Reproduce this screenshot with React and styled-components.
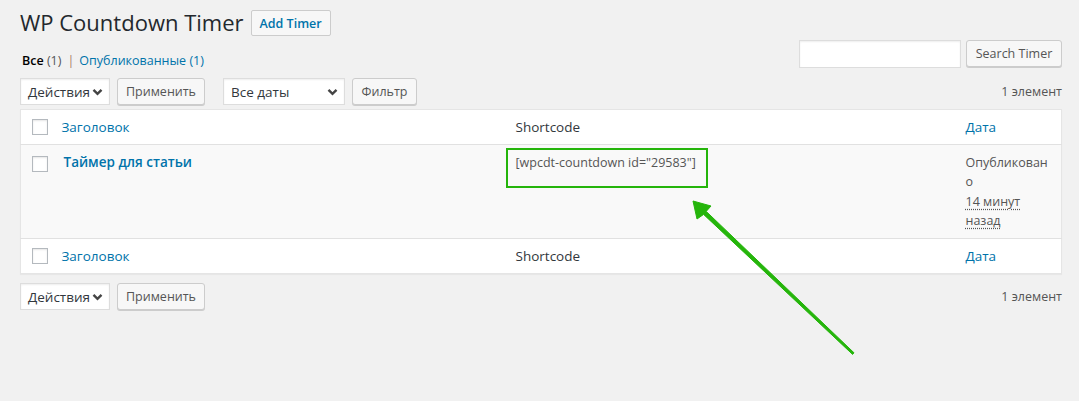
import React from "react";
import styled, { createGlobalStyle } from "styled-components";

const rows = [
    { id: 29583, title: "Таймер для статьи", status: "Опубликовано", ago: "14 минут назад" },
];

export default function App() {
    return (
        <>
            <GlobalStyle />
            <Page>
                <TitleRow>
                    <PageTitle>WP Countdown Timer</PageTitle>
                    <TitleAction>Add Timer</TitleAction>
                </TitleRow>

                <FilterRow>
                    <Views>
                        <CurrentView>Все</CurrentView> <Count>(1)</Count>
                        <Sep>|</Sep>
                        <ViewLink>Опубликованные <Count $link>(1)</Count></ViewLink>
                    </Views>
                    <SearchBox>
                        <SearchInput type="search" />
                        <Button $w={96}>Search Timer</Button>
                    </SearchBox>
                </FilterRow>

                <TableNav>
                    <Select width={90}>Действия</Select>
                    <Button $w={88}>Применить</Button>
                    <Select width={122} $spaced>Все даты</Select>
                    <Button $w={65}>Фильтр</Button>
                    <ItemCount>1 элемент</ItemCount>
                </TableNav>

                <Table>
                    <colgroup>
                        <col style={{ width: 31 }} />
                        <col style={{ width: 454 }} />
                        <col style={{ width: 450 }} />
                        <col />
                    </colgroup>
                    <thead>
                        <HeadRow>
                            <CheckCell><CheckBox /></CheckCell>
                            <HeadCell><SortLink>Заголовок</SortLink></HeadCell>
                            <HeadCell>Shortcode</HeadCell>
                            <HeadCell><SortLink>Дата</SortLink></HeadCell>
                        </HeadRow>
                    </thead>
                    <tbody>
                        {rows.map((r) => (
                            <BodyRow key={r.id}>
                                <CheckCell $body><CheckBox /></CheckCell>
                                <Cell><RowTitle>{r.title}</RowTitle></Cell>
                                <ShortcodeCell>
                                    [wpcdt-countdown id="{r.id}"]
                                    <Highlight />
                                </ShortcodeCell>
                                <Cell>
                                    {r.status}
                                    <br />
                                    <Abbr>{r.ago}</Abbr>
                                </Cell>
                            </BodyRow>
                        ))}
                    </tbody>
                    <tfoot>
                        <FootRow>
                            <CheckCell><CheckBox /></CheckCell>
                            <HeadCell><SortLink>Заголовок</SortLink></HeadCell>
                            <HeadCell>Shortcode</HeadCell>
                            <HeadCell><SortLink>Дата</SortLink></HeadCell>
                        </FootRow>
                    </tfoot>
                </Table>

                <TableNav $bottom>
                    <Select width={90}>Действия</Select>
                    <Button $w={88}>Применить</Button>
                    <ItemCount>1 элемент</ItemCount>
                </TableNav>

                <Arrow width="1079" height="401" viewBox="0 0 1079 401">
                    <polygon
                        points="693,201 711,206 706.2,211.4 854,352.8 852.6,354.4 703.6,214.4 697,219"
                        fill="#25b50b"
                        stroke="#25b50b"
                        strokeWidth="1"
                        strokeLinejoin="round"
                    />
                </Arrow>
            </Page>
        </>
    );
}

function Select({ children, width, $spaced }) {
    return (
        <SelectBox style={{ width }} $spaced={$spaced}>
            <span>{children}</span>
            <svg width="11" height="8" viewBox="0 0 11 8">
                <path d="M1.5 1.8 L5.5 5.8 L9.5 1.8" fill="none" stroke="#444" strokeWidth="2.4" />
            </svg>
        </SelectBox>
    );
}

//====================================
//        THIS COMPONENT STYLES
//====================================
const GlobalStyle = createGlobalStyle`
    html, body {
        margin: 0;
        background: #f1f1f1;
    }
    body {
        font-family: "Open Sans", "Liberation Sans", sans-serif;
        font-size: 12.5px;
        color: #444;
    }
`;
const Page = styled('div')`
    position: relative;
    width: 1079px;
    height: 401px;
    box-sizing: border-box;
    padding: 0 17px 0 20px;
    overflow: hidden;
`;
const TitleRow = styled('div')`
    display: flex;
    align-items: center;
    column-gap: 7px;
    padding-top: 9px;
    height: 27px;
`;
const PageTitle = styled('h1')`
    margin: 0;
    font-size: 22px;
    font-weight: 400;
    line-height: 27px;
    color: #23282d;
`;
const Button = styled('button')`
    box-sizing: border-box;
    width: ${(props) => (props.$w ? `${props.$w}px` : "auto")};
    font-family: inherit;
    font-size: 12.5px;
    height: 27px;
    padding: 0 8px;
    border: 1px solid #ccc;
    border-radius: 3px;
    background: #f7f7f7;
    color: #555;
    box-shadow: 0 1px 0 #ccc;
    white-space: nowrap;
    cursor: pointer;
`;
const TitleAction = styled(Button)`
    width: 80px;
    height: 26px;
    font-weight: 600;
    color: #0073aa;
    border-radius: 2px;
    box-shadow: none;
    margin-top: 1px;
`;
const FilterRow = styled('div')`
    display: flex;
    justify-content: space-between;
    align-items: flex-start;
    margin-top: 4px;
`;
const Views = styled('div')`
    margin-top: 12px;
    padding-left: 2px;
    line-height: 18px;
    color: #666;
`;
const CurrentView = styled('span')`
    color: #000;
    font-weight: 600;
`;
const Count = styled('span')`
    color: ${(props) => (props.$link ? "#0073aa" : "#555")};
`;
const Sep = styled('span')`
    color: #a87d6a;
    margin: 0 5px 0 6px;
`;
const ViewLink = styled('a')`
    color: #0073aa;
`;
const SearchBox = styled('div')`
    display: flex;
    column-gap: 5px;
`;
const SearchInput = styled('input')`
    width: 162px;
    height: 28px;
    box-sizing: border-box;
    margin: 0;
    border: 1px solid #ddd;
    background: #fff;
    box-shadow: inset 0 1px 2px rgba(0, 0, 0, 0.07);
`;
const TableNav = styled('div')`
    display: flex;
    align-items: center;
    column-gap: 7px;
    margin-top: ${(props) => (props.$bottom ? "9px" : "8px")};
    height: 27px;
`;
const SelectBox = styled('div')`
    box-sizing: border-box;
    height: 27px;
    display: flex;
    align-items: center;
    justify-content: space-between;
    padding: 0 6px 0 7px;
    margin-left: ${(props) => (props.$spaced ? "11px" : "0")};
    background: #fff;
    border: 1px solid #ddd;
    box-shadow: inset 0 1px 2px rgba(0, 0, 0, 0.07);
    color: #32373c;
    font-size: 13.5px;
`;
const ItemCount = styled('span')`
    margin-left: auto;
    color: #555;
`;
const Table = styled('table')`
    width: 100%;
    margin-top: 4px;
    table-layout: fixed;
    border-collapse: collapse;
    background: #fff;
    border: 1px solid #e5e5e5;
    box-shadow: 0 1px 1px rgba(0, 0, 0, 0.04);
`;
const HeadRow = styled('tr')`
    height: 35px;
    border-bottom: 1px solid #e1e1e1;
`;
const FootRow = styled('tr')`
    height: 35px;
    border-top: 1px solid #e1e1e1;
`;
const BodyRow = styled('tr')`
    background: #f9f9f9;
`;
const HeadCell = styled('th')`
    text-align: left;
    font-weight: 400;
    font-size: 13.5px;
    color: #32373c;
    padding: 0 10px;
`;
const SortLink = styled('a')`
    color: #0073aa;
`;
const CheckCell = styled('td')`
    padding: ${(props) => (props.$body ? "11px 0 0 11px" : "0 0 0 11px")};
    vertical-align: ${(props) => (props.$body ? "top" : "middle")};
`;
const CheckBox = styled('span')`
    display: block;
    width: 16px;
    height: 16px;
    box-sizing: border-box;
    border: 1px solid #b4b9be;
    background: #fff;
    box-shadow: inset 0 1px 2px rgba(0, 0, 0, 0.1);
`;
const Cell = styled('td')`
    vertical-align: top;
    padding: 8px 10px 8px;
    line-height: 19.3px;
    font-size: 12.5px;
    color: #555;
    overflow-wrap: anywhere;
`;
const ShortcodeCell = styled(Cell)`
    position: relative;
`;
const RowTitle = styled('a')`
    display: inline-block;
    margin-left: 2px;
    font-size: 13.5px;
    font-weight: 600;
    color: #0073aa;
`;
const Abbr = styled('abbr')`
    text-decoration: underline dotted;
    text-underline-offset: 3px;
`;
const Highlight = styled('span')`
    position: absolute;
    left: 0;
    top: 3px;
    width: 202px;
    height: 40px;
    box-sizing: border-box;
    border: 2px solid #25b50b;
`;
const Arrow = styled('svg')`
    position: absolute;
    left: 0;
    top: 0;
    pointer-events: none;
`;
